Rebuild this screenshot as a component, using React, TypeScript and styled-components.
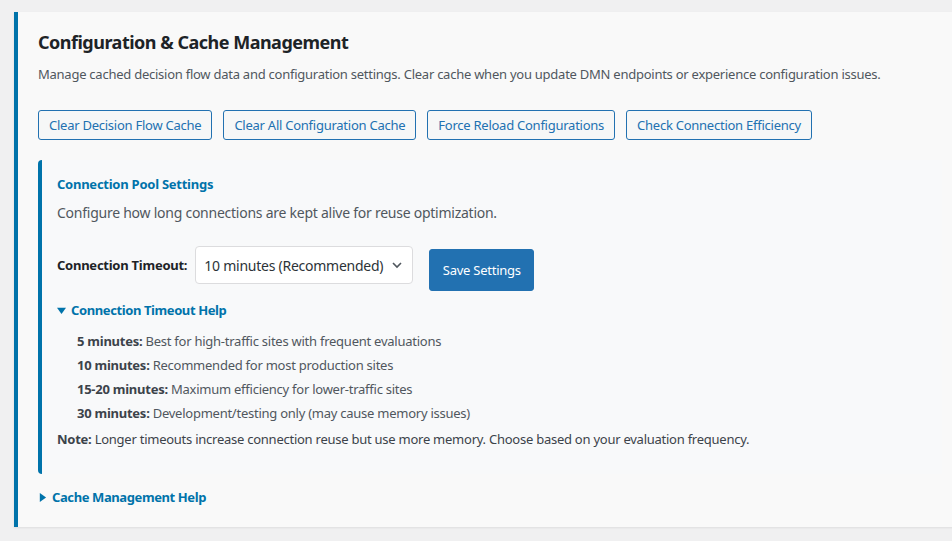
import React from "react";
import styled, { createGlobalStyle } from "styled-components";

const Global = createGlobalStyle`
  html, body { margin: 0; padding: 0; }
  body {
    background: #f0f0f1;
    font-family: "Noto Sans", "Open Sans", sans-serif;
    color: #3c434a;
    letter-spacing: -0.25px;
    overflow: hidden;
  }
  button { letter-spacing: inherit; }
`;

const Page = styled.div`
  padding: 12px 0 14px 14px;
`;

const Card = styled.section`
  background: #f9f9f9;
  border-left: 4px solid #0073aa;
  box-shadow: 0 1px 2px rgba(0, 0, 0, 0.08);
  padding: 18px 20px 20px 20px;
  margin-right: -10px;
`;

const Title = styled.h2`
  margin: 0;
  font-size: 18px;
  line-height: 24px;
  font-weight: 700;
  letter-spacing: -0.5px;
  color: #1d2327;
`;

const Lead = styled.p`
  margin: 10px 0 0;
  font-size: 13px;
  line-height: 20px;
  color: #50575e;
`;

const ButtonRow = styled.div`
  display: flex;
  gap: 11px;
  margin-top: 26px;
`;

const OutlineButton = styled.button`
  font-family: inherit;
  font-size: 13px;
  height: 30px;
  padding: 0 10px;
  background: #f6f7f7;
  color: #2271b1;
  border: 1px solid #2271b1;
  border-radius: 3px;
  cursor: pointer;
`;

const Panel = styled.div`
  margin-top: 20px;
  border-left: 4px solid #0073aa;
  border-radius: 4px 0 0 4px;
  background: #f8f9fa;
  padding: 14px 16px 25px 15px;
`;

const PanelTitle = styled.h3`
  margin: 0;
  font-size: 13px;
  line-height: 20px;
  font-weight: 700;
  color: #0073aa;
`;

const PanelText = styled.p`
  margin: 8px 0 0;
  font-size: 14px;
  line-height: 22px;
  color: #50575e;
`;

const FormRow = styled.div`
  display: flex;
  align-items: flex-start;
  margin-top: 22px;
`;

const Label = styled.label`
  font-size: 13px;
  line-height: 38px;
  font-weight: 700;
  color: #1d2327;
  margin-right: 8px;
`;

const SelectBox = styled.div`
  width: 218px;
  height: 38px;
  box-sizing: border-box;
  background: #fff;
  border: 1px solid #dcdcde;
  border-radius: 4px;
  display: flex;
  align-items: center;
  justify-content: space-between;
  padding: 0 9px 0 8px;
  font-size: 14px;
  color: #2c3338;
`;

const PrimaryButton = styled.button`
  font-family: inherit;
  margin-left: 16px;
  margin-top: 3px;
  width: 105px;
  height: 42px;
  background: #2271b1;
  color: #fff;
  border: 1px solid #2271b1;
  border-radius: 3px;
  font-size: 13px;
  cursor: pointer;
`;

const Summary = styled.div`
  display: flex;
  align-items: center;
  gap: 5px;
  font-size: 13px;
  font-weight: 700;
  letter-spacing: -0.4px;
  color: #0073aa;
  line-height: 20px;
`;

const HelpBlock = styled.div`
  margin-top: 9px;
`;

const HelpList = styled.ul`
  list-style: none;
  margin: 11px 0 0;
  padding: 0 0 0 20px;
  display: flex;
  flex-direction: column;
  gap: 4px;
`;

const HelpItem = styled.li`
  font-size: 13px;
  line-height: 20px;
  color: #50575e;
  b { color: #3c434a; }
`;

const Note = styled.p`
  margin: 6px 0 0;
  font-size: 13px;
  line-height: 20px;
  color: #3c434a;
`;

const Footer = styled.div`
  margin-top: 13px;
`;

const Caret = ({ open }: { open: boolean }) => (
  <svg width="9" height="9" viewBox="0 0 10 10" fill="#0073aa">
    {open ? <path d="M0 2h10L5 9z" /> : <path d="M2 0v10l7-5z" />}
  </svg>
);

const Chevron = () => (
  <svg width="12" height="12" viewBox="0 0 12 12" fill="none" stroke="#50575e" strokeWidth="1.6">
    <path d="M2 4l4 4 4-4" />
  </svg>
);

const items = [
  ["5 minutes:", "Best for high-traffic sites with frequent evaluations"],
  ["10 minutes:", "Recommended for most production sites"],
  ["15-20 minutes:", "Maximum efficiency for lower-traffic sites"],
  ["30 minutes:", "Development/testing only (may cause memory issues)"],
];

export default function App() {
  return (
    <>
      <Global />
      <Page>
        <Card>
          <Title>Configuration &amp; Cache Management</Title>
          <Lead>
            Manage cached decision flow data and configuration settings. Clear cache when you update DMN
            endpoints or experience configuration issues.
          </Lead>
          <ButtonRow>
            <OutlineButton>Clear Decision Flow Cache</OutlineButton>
            <OutlineButton>Clear All Configuration Cache</OutlineButton>
            <OutlineButton>Force Reload Configurations</OutlineButton>
            <OutlineButton>Check Connection Efficiency</OutlineButton>
          </ButtonRow>
          <Panel>
            <PanelTitle>Connection Pool Settings</PanelTitle>
            <PanelText>Configure how long connections are kept alive for reuse optimization.</PanelText>
            <FormRow>
              <Label>Connection Timeout:</Label>
              <SelectBox>
                <span>10 minutes (Recommended)</span>
                <Chevron />
              </SelectBox>
              <PrimaryButton>Save Settings</PrimaryButton>
            </FormRow>
            <HelpBlock>
              <Summary>
                <Caret open />
                Connection Timeout Help
              </Summary>
              <HelpList>
                {items.map(([k, v]) => (
                  <HelpItem key={k}>
                    <b>{k}</b> {v}
                  </HelpItem>
                ))}
              </HelpList>
              <Note>
                <b>Note:</b> Longer timeouts increase connection reuse but use more memory. Choose based on your
                evaluation frequency.
              </Note>
            </HelpBlock>
          </Panel>
          <Footer>
            <Summary>
              <Caret open={false} />
              Cache Management Help
            </Summary>
          </Footer>
        </Card>
      </Page>
    </>
  );
}
